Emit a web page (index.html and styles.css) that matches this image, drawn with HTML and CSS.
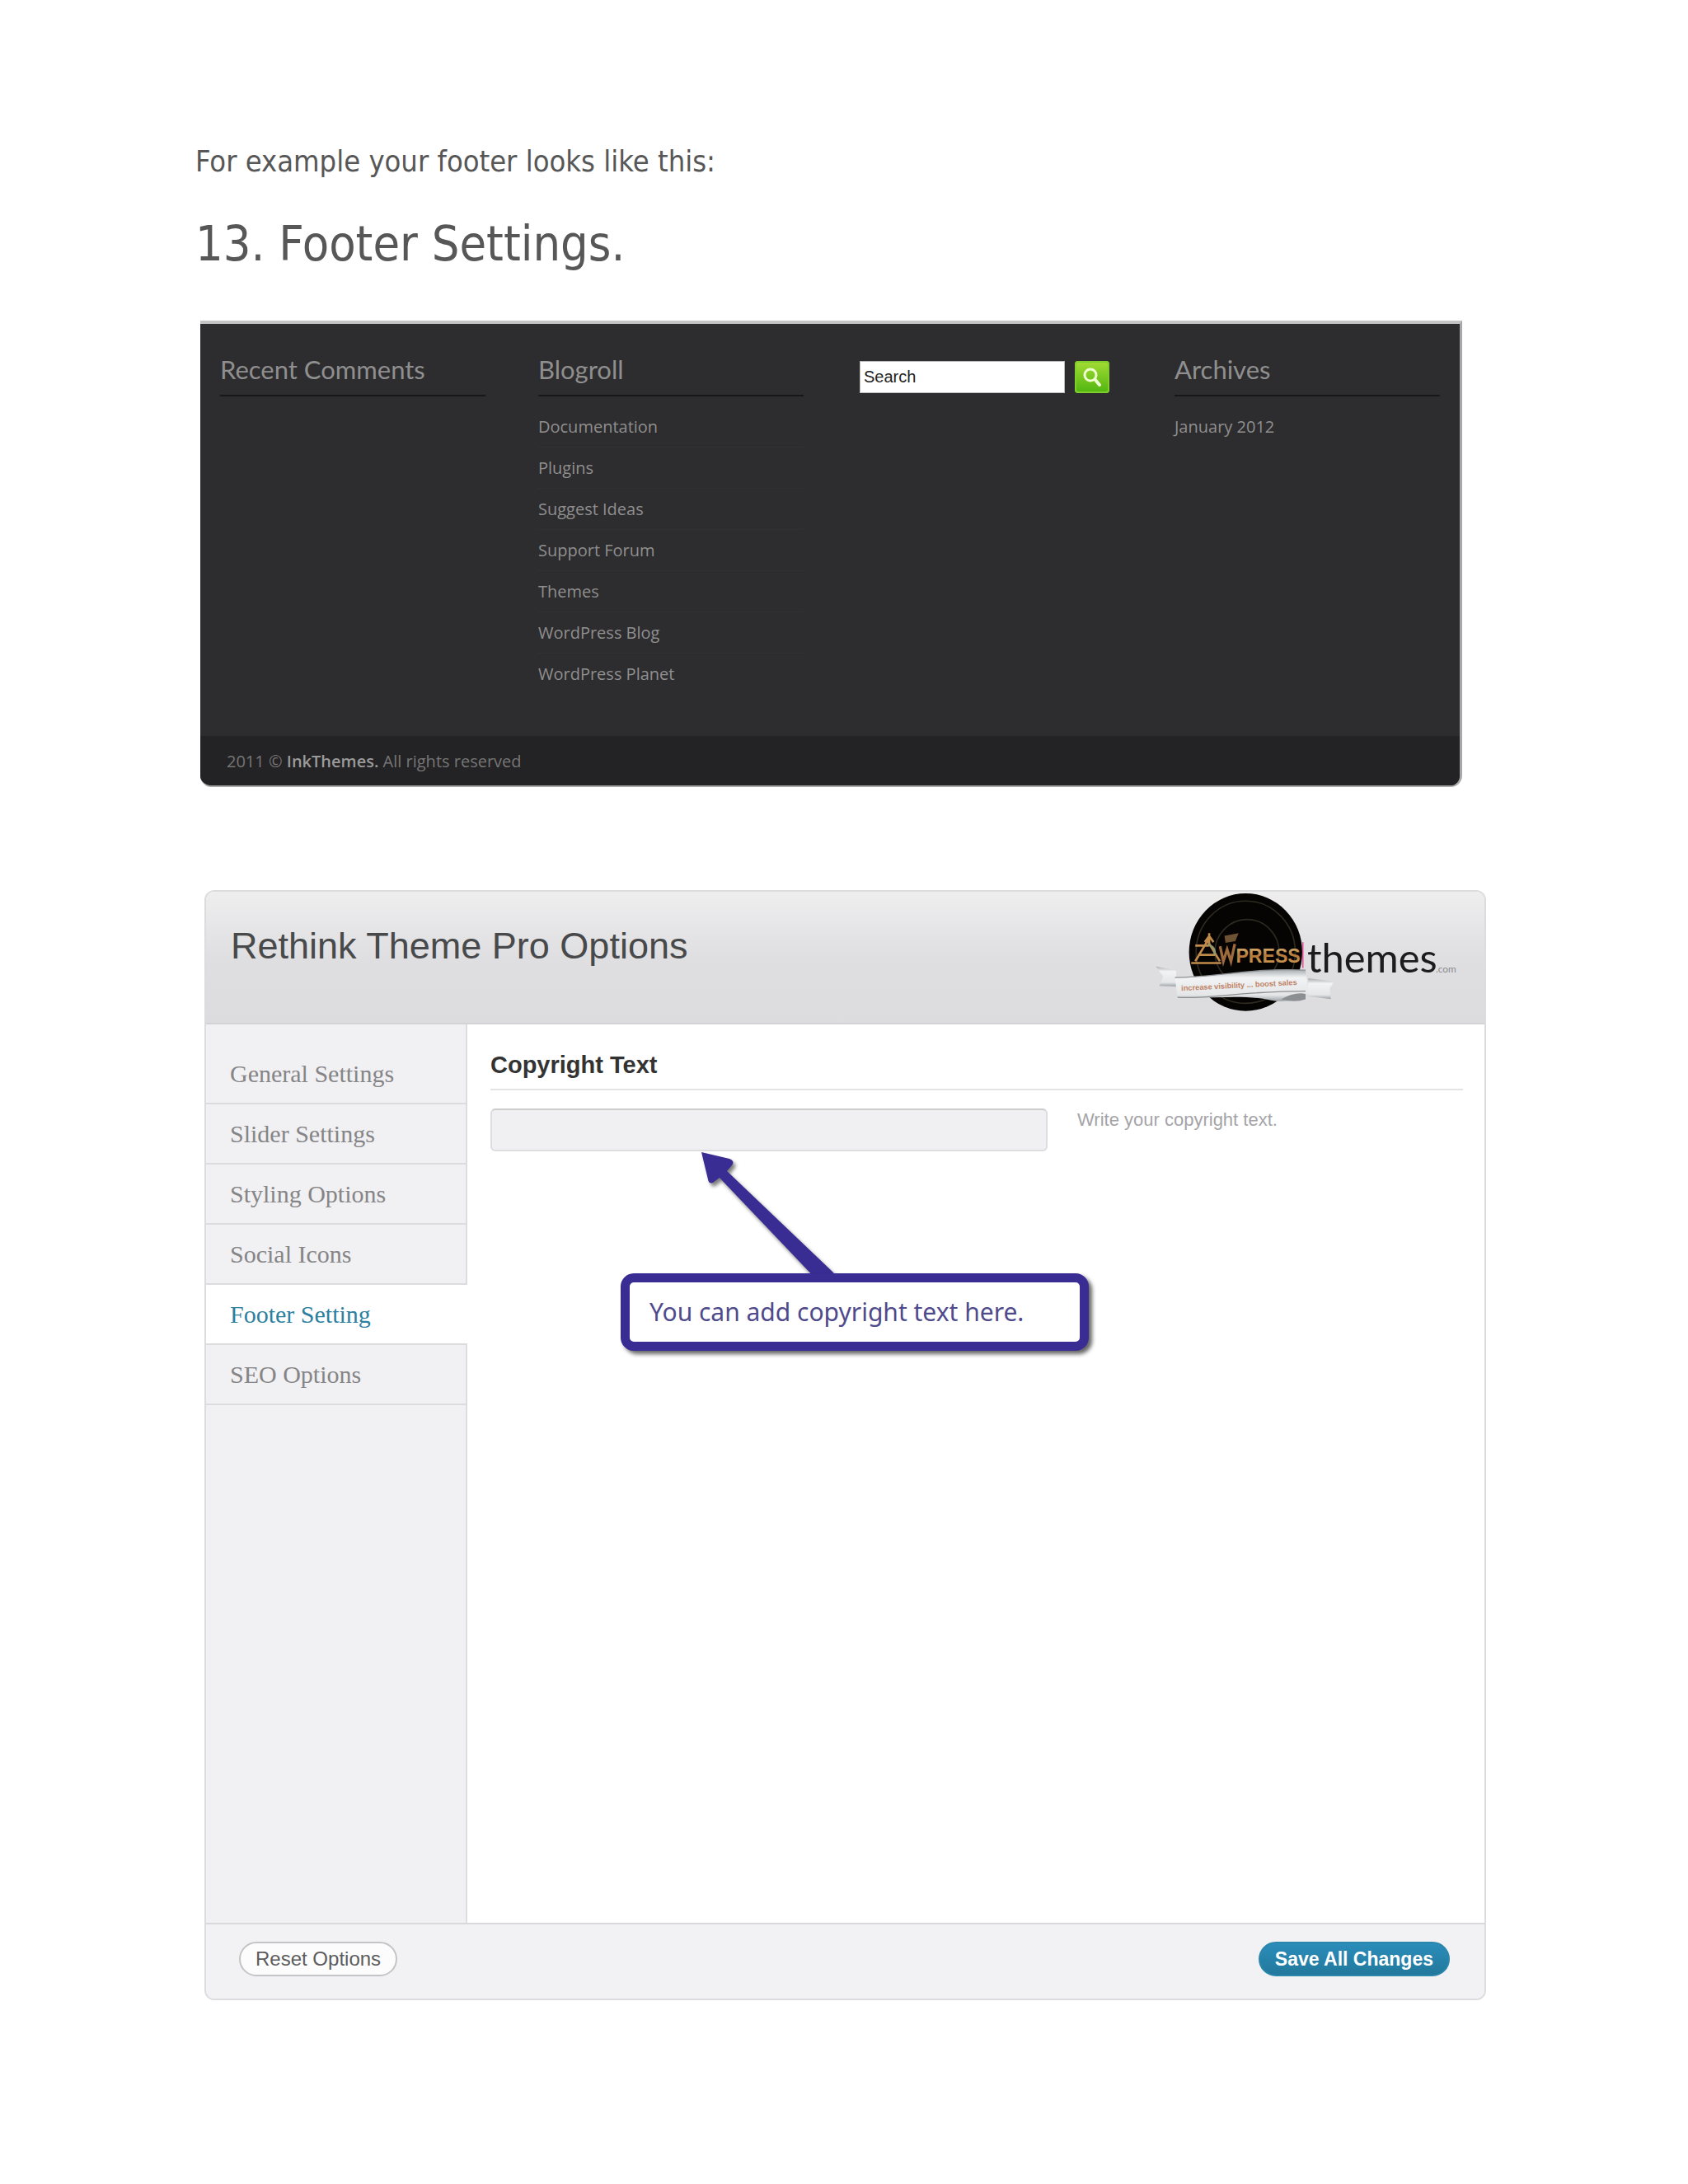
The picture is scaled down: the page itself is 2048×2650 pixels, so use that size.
FILE: index.html
```html
<!DOCTYPE html>
<html lang="en">
<head>
  <meta charset="UTF-8">
  <title>Footer Settings</title>
  <link rel="stylesheet" href="styles.css">
</head>
<body>
  <main class="page">
    <p class="intro">For example your footer looks like this:</p>
    <h1>13. Footer Settings.</h1>

    <section class="site-footer">
      <div class="widgets">
        <div class="widget">
          <h2>Recent Comments</h2>
        </div>
        <div class="widget">
          <h2>Blogroll</h2>
          <ul>
            <li><a href="#">Documentation</a></li>
            <li><a href="#">Plugins</a></li>
            <li><a href="#">Suggest Ideas</a></li>
            <li><a href="#">Support Forum</a></li>
            <li><a href="#">Themes</a></li>
            <li><a href="#">WordPress Blog</a></li>
            <li><a href="#">WordPress Planet</a></li>
          </ul>
        </div>
        <div class="widget">
          <form class="search">
            <input type="text" value="Search" aria-label="Search">
            <button type="button" aria-label="Search">
              <svg viewBox="0 0 42 39" width="42" height="39">
                <circle cx="19" cy="17" r="7" fill="none" stroke="#efffd0" stroke-width="3"/>
                <path d="M25 23l5 6" stroke="#efffd0" stroke-width="4" stroke-linecap="round"/>
              </svg>
            </button>
          </form>
        </div>
        <div class="widget">
          <h2>Archives</h2>
          <ul>
            <li><a href="#">January 2012</a></li>
          </ul>
        </div>
      </div>
      <div class="copyright">2011 © <a href="#">InkThemes.</a> All rights reserved</div>
    </section>

    <section class="options">
      <header class="options-header">
        <h2>Rethink Theme Pro Options</h2>
        <svg class="logo" viewBox="45 30 1130 445" role="img" aria-label="InkPress themes.com">
          <defs>
            <linearGradient id="gold" x1="0" y1="0" x2="0" y2="1">
              <stop offset="0" stop-color="#d9b878"/>
              <stop offset=".5" stop-color="#b5793a"/>
              <stop offset="1" stop-color="#d8a45c"/>
            </linearGradient>
            <linearGradient id="ribbon" x1="0" y1="0" x2="0" y2="1">
              <stop offset="0" stop-color="#a9adb0"/>
              <stop offset=".25" stop-color="#f2f3f4"/>
              <stop offset=".8" stop-color="#e4e6e8"/>
              <stop offset="1" stop-color="#9da1a4"/>
            </linearGradient>
          </defs>
          <ellipse cx="390" cy="252" rx="208" ry="216" fill="#050403"/>
          <ellipse cx="390" cy="252" rx="182" ry="188" fill="none" stroke="#2e2a20" stroke-width="5"/>
          <ellipse cx="395" cy="252" rx="118" ry="120" fill="none" stroke="#2e2a20" stroke-width="5"/>
          <path d="M600 215v95" stroke="#e0559a" stroke-width="5"/>
          <!-- drafting tools emblem -->
          <path d="M190 292h110M205 285l45-75 45 75M205 228h50M256 182v40M240 215l16-22 16 22M215 262h62" fill="none" stroke="#c08a4a" stroke-width="8"/>
          <path d="M250 225q32 6 26 38" fill="none" stroke="#8f9a70" stroke-width="7"/>
          <path d="M312 192l52-10-12 30-36 6z" fill="#6d5233"/>
          <path d="M296 230l12 56 14-44 14 44 14-64" fill="none" stroke="#9c6a3c" stroke-width="10"/>
          <text class="logo-press" x="354" y="290" fill="url(#gold)">PRESS</text>
          <path d="M60 304l75 16v58l-62-2 14-34z" fill="url(#ribbon)"/>
          <path d="M620 348l95 12-16 26 4 38-85-10z" fill="url(#ribbon)"/>
          <path d="M130 345C280 345 420 308 610 318L622 400Q560 445 480 428C370 405 260 425 140 418Z" fill="url(#ribbon)"/>
          <path d="M520 425q50-28 90-20v20q-40 14-90 0z" fill="#8b8f92"/>
          <path d="M130 345C280 345 420 308 610 318M140 418C260 425 370 395 610 395" fill="none" stroke="#8d9194" stroke-width="4"/>
          <text class="logo-tag" x="154" y="394" transform="rotate(-3 154 394)">increase visibility ... boost sales</text>
          <text class="logo-name" x="616" y="326">themes</text>
          <text class="logo-com" x="1088" y="328">.com</text>
        </svg>
      </header>

      <div class="options-body">
        <nav class="tabs">
          <a href="#">General Settings</a>
          <a href="#">Slider Settings</a>
          <a href="#">Styling Options</a>
          <a href="#">Social Icons</a>
          <a href="#" class="active">Footer Setting</a>
          <a href="#">SEO Options</a>
        </nav>
        <div class="content">
          <label for="copyright">Copyright Text</label>
          <div class="field">
            <div class="control">
              <input type="text" id="copyright">
              <svg class="arrow" viewBox="0 0 180 160" width="180" height="160">
                <path d="M5 3l34 8q7 3 3 8l-6 7 128 122q8 8 3 12H147L27 34l-8 6q-5 2-6-4z" fill="#392c93"/>
              </svg>
              <div class="callout">You can add copyright text here.</div>
            </div>
            <p class="hint">Write your copyright text.</p>
          </div>
        </div>
      </div>

      <footer class="options-footer">
        <button type="button" class="btn">Reset Options</button>
        <button type="button" class="btn btn-save">Save All Changes</button>
      </footer>
    </section>
  </main>
</body>
</html>
```
FILE: styles.css
```css
* {
  box-sizing: border-box;
}

body {
  margin: 0;
  background: #fff;
  color: #575757;
  font-family: "Liberation Sans", Arial, sans-serif;
}

h1, h2, p, ul {
  margin: 0;
  padding: 0;
  font-weight: normal;
}

a {
  color: inherit;
  text-decoration: none;
}

.page {
  padding: 172px 245px 225px 237px;
}

.intro {
  font-family: "DejaVu Sans Condensed", "DejaVu Sans", sans-serif;
  font-size: 36px;
  line-height: 48px;
}

h1 {
  margin-top: 36px;
  font-family: "DejaVu Sans Condensed", "DejaVu Sans", sans-serif;
  font-size: 59px;
  line-height: 80px;
}

/* dark site footer */
.site-footer {
  margin: 53px 29px 0 6px;
  border-top: 4px solid #c4c4c4;
  border-right: 3px solid #a8a8a8;
  border-bottom: 2px solid #a8a8a8;
  border-radius: 0 0 14px 14px;
  background: #2d2c2e;
  color: #8f8f8f;
  font-family: "Open Sans", sans-serif;
  overflow: hidden;
}

.widgets {
  display: grid;
  grid-template-columns: repeat(4, 1fr);
  gap: 64px;
  min-height: 500px;
  padding: 36px 24px;
}

.widget h2 {
  height: 52px;
  border-bottom: 2px solid #171717;
  font-family: Lato, sans-serif;
  font-size: 31px;
  line-height: 38px;
}

.widget ul {
  margin-top: 12px;
  list-style: none;
}

.widget li {
  height: 50px;
  border-bottom: 1px solid #313032;
  font-size: 20px;
  line-height: 50px;
}

.widget li:last-child {
  border-bottom: 0;
}

.search {
  display: flex;
  gap: 12px;
  margin-top: 9px;
  padding-left: 4px;
}

.search input {
  width: 249px;
  height: 39px;
  padding: 0 4px;
  border: 1px solid #bbb;
  background: #fff;
  color: #222;
  font: 20px "Liberation Sans", Arial, sans-serif;
}

.search button {
  width: 42px;
  height: 39px;
  padding: 0;
  border: 0;
  border-radius: 4px;
  background: linear-gradient(#a5dc35, #4fb50f);
  box-shadow: inset 0 0 0 2px #7fce2c;
}

.search svg {
  display: block;
}

.copyright {
  height: 60px;
  padding-left: 32px;
  background: #232224;
  color: #767676;
  font-size: 20px;
  line-height: 62px;
}

.copyright a {
  color: #9a9a9a;
  font-weight: 600;
}

/* theme options panel */
.options {
  margin: 125px 0 0 11px;
  border: 2px solid #dcdbdd;
  border-radius: 12px;
  background: #fff;
}

.options-header {
  display: flex;
  justify-content: space-between;
  align-items: flex-start;
  height: 161px;
  padding-right: 30px;
  padding-left: 30px;
  border-bottom: 2px solid #d3d2d4;
  border-radius: 10px 10px 0 0;
  background: linear-gradient(#eeeeef, #dfdee0 50%, #dcdbde);
}

.options-header h2 {
  margin-top: 40px;
  color: #48494b;
  font-size: 45px;
  line-height: 52px;
}

.logo {
  width: 374px;
  height: 147px;
}

.logo-press {
  font: bold 70px "Liberation Sans", sans-serif;
}

.logo-tag {
  fill: #c08468;
  font: bold 28px "Liberation Sans", sans-serif;
}

.logo-name {
  fill: #1c1c1e;
  font: 148px Lato, sans-serif;
}

.logo-com {
  fill: #8a8a8c;
  font: 36px Lato, sans-serif;
}

.options-body {
  display: grid;
  grid-template-columns: 317px 1fr;
  min-height: 1090px;
}

.tabs {
  display: flex;
  flex-direction: column;
  padding-top: 24px;
  border-right: 2px solid #dcdbdd;
  background: #f1f0f2;
}

.tabs a {
  height: 73px;
  padding-left: 29px;
  border-bottom: 2px solid #dcdbdd;
  color: #858587;
  font-family: "Liberation Serif", "Times New Roman", serif;
  font-size: 30px;
  line-height: 72px;
}

.tabs .active {
  margin-right: -2px;
  background: #fff;
  color: #2d809f;
}

.content {
  padding: 30px 26px 30px 28px;
}

.content label {
  display: block;
  height: 50px;
  border-bottom: 2px solid #e4e3e5;
  color: #333;
  font-size: 29px;
  font-weight: bold;
  line-height: 38px;
}

.field {
  display: grid;
  grid-template-columns: 13fr 9fr;
  gap: 36px;
  margin-top: 22px;
}

.control {
  position: relative;
}

.control input {
  display: block;
  width: 100%;
  height: 52px;
  border: 2px solid #dddce0;
  border-top-color: #ccc;
  border-radius: 6px;
  background: #f0eff2;
}

/* annotation lying over the form */
.arrow {
  position: absolute;
  top: 50px;
  left: 251px;
  filter: drop-shadow(3px 4px 2px rgba(0, 0, 0, 0.5));
}

.callout {
  position: absolute;
  top: 200px;
  left: 158px;
  width: 568px;
  height: 94px;
  padding-left: 24px;
  border: 11px solid #392c93;
  border-radius: 16px;
  background: #fff;
  box-shadow: 4px 4px 5px rgba(0, 0, 0, 0.6);
  color: #4f4a8c;
  font-family: "Noto Sans", sans-serif;
  font-size: 30px;
  line-height: 72px;
  white-space: nowrap;
}

.hint {
  color: #a5a4a8;
  font-size: 22px;
  line-height: 28px;
}

.options-footer {
  display: flex;
  justify-content: space-between;
  align-items: center;
  height: 92px;
  padding: 0 42px 6px 40px;
  border-top: 2px solid #d9d8da;
  border-radius: 0 0 10px 10px;
  background: #f2f1f3;
}

.btn {
  height: 42px;
  padding: 0 18px;
  border: 2px solid #c4c4c6;
  border-radius: 21px;
  background: #fcfcfd;
  color: #5c5c5e;
  font: 24px "Liberation Sans", Arial, sans-serif;
}

.btn-save {
  border-color: #2b86ab;
  background: linear-gradient(#2b8dba, #22789c);
  color: #fff;
  font-size: 23px;
  font-weight: bold;
}
```
